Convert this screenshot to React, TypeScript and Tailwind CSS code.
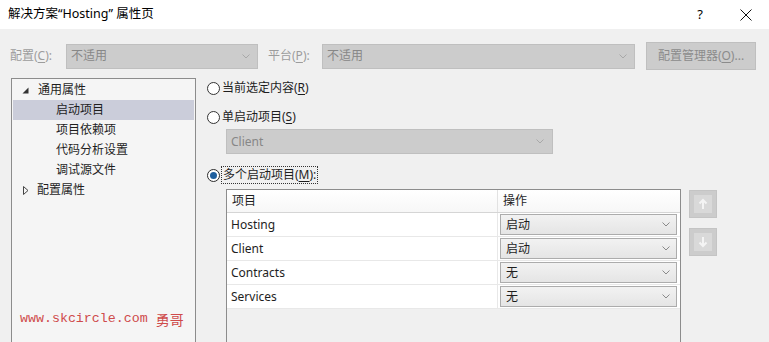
import React from "react";

function Chevron({ c = "#a0a0a0" }: { c?: string }) {
  return (
    <svg width="8" height="5" viewBox="0 0 8 5">
      <path d="M0.5 0.5 L4 4 L7.5 0.5" fill="none" stroke={c} strokeWidth="1" />
    </svg>
  );
}

function U({ children }: { children: React.ReactNode }) {
  return <span className="underline underline-offset-[2px]">{children}</span>;
}

function DisabledCombo({ text, w }: { text: string; w: string }) {
  return (
    <div className={`${w} h-[25px] bg-[#cccccc] border border-[#bfbfbf] flex items-center justify-between pl-[4px] pr-[7px] text-[#878787]`}>
      <span>{text}</span>
      <Chevron c="#a8a8a8" />
    </div>
  );
}

function Radio({ checked }: { checked?: boolean }) {
  return (
    <div className={`w-[13px] h-[13px] rounded-full border ${checked ? "border-[#2b2b2b]" : "border-[#333333]"} bg-white flex items-center justify-center shrink-0`}>
      {checked && <div className="w-[7px] h-[7px] rounded-full bg-[#1f5f9e]" />}
    </div>
  );
}

function OpCombo({ text }: { text: string }) {
  return (
    <div className="h-[21px] ml-[2px] mr-[1px] border border-[#acacac] bg-gradient-to-b from-[#f2f2f2] to-[#e5e5e5] flex items-center justify-between pl-[5px] pr-[6px] text-[#1e1e1e]">
      <span>{text}</span>
      <Chevron c="#8a8a8a" />
    </div>
  );
}

function ArrowBtn({ up }: { up?: boolean }) {
  return (
    <div className="w-[28px] h-[28px] bg-[#cccccc] border border-[#c4c4c4] flex items-center justify-center">
      <div className="w-[18px] h-[18px] bg-[#d9d9d9] flex items-center justify-center">
        <svg width="10" height="12" viewBox="0 0 10 12">
          {up ? (
            <path d="M5 11 V2 M1.5 5.5 L5 2 L8.5 5.5" fill="none" stroke="#f4f4f4" strokeWidth="2" />
          ) : (
            <path d="M5 1 V10 M1.5 6.5 L5 10 L8.5 6.5" fill="none" stroke="#f4f4f4" strokeWidth="2" />
          )}
        </svg>
      </div>
    </div>
  );
}

export default function App() {
  const rows: [string, string][] = [
    ["Hosting", "启动"],
    ["Client", "启动"],
    ["Contracts", "无"],
    ["Services", "无"],
  ];
  return (
    <div className="w-[769px] h-[342px] overflow-hidden bg-[#f0f0f0] text-[12px] leading-none text-[#1e1e1e] font-['Noto_Sans','Noto_Sans_CJK_SC',sans-serif] flex flex-col">
      {/* title bar */}
      <div className="h-[29px] bg-white flex items-center pl-[8px] shrink-0">
        <span className="text-[12.5px] text-black">解决方案“Hosting” 属性页</span>
        <div className="flex-1" />
        <span className="text-[13px] text-black mr-[37px]">?</span>
        <svg width="12" height="12" viewBox="0 0 12 12" className="mr-[17px]">
          <path d="M0.5 0.5 L11.5 11.5 M11.5 0.5 L0.5 11.5" stroke="#111" strokeWidth="1" />
        </svg>
      </div>

      {/* config row */}
      <div className="mt-[13px] h-[28px] flex items-center pl-[10px] shrink-0">
        <span className="text-[#9c9c9c] w-[56px]">
          配置(<U>C</U>):
        </span>
        <DisabledCombo text="不适用" w="w-[192px]" />
        <span className="text-[#9c9c9c] ml-[10px] w-[54px]">
          平台(<U>P</U>):
        </span>
        <DisabledCombo text="不适用" w="w-[313px]" />
        <div className="ml-[11px] w-[110px] h-[28px] bg-[#cccccc] border border-[#bfbfbf] flex items-center justify-center text-[#8b8b8b]">
          配置管理器(<U>O</U>)...
        </div>
      </div>

      {/* main */}
      <div className="mt-[8px] flex flex-1 min-h-0 pl-[11px]">
        {/* tree */}
        <div className="w-[185px] h-[300px] border border-[#8c8c8c] bg-[#f5f5f5] pt-[1px] px-[1px] shrink-0">
          <div className="h-[20px] flex items-center">
            <svg width="7" height="7" viewBox="0 0 7 7" className="ml-[9px] mr-[9px]">
              <path d="M6.5 0.5 L6.5 6.5 L0.5 6.5 Z" fill="#333" />
            </svg>
            <span>通用属性</span>
          </div>
          <div className="h-[20px] flex items-center bg-[#cbcdda] pl-[43px]">启动项目</div>
          <div className="h-[20px] flex items-center pl-[43px]">项目依赖项</div>
          <div className="h-[20px] flex items-center pl-[43px]">代码分析设置</div>
          <div className="h-[20px] flex items-center pl-[43px]">调试源文件</div>
          <div className="h-[20px] flex items-center">
            <svg width="6" height="9" viewBox="0 0 6 9" className="ml-[10px] mr-[8px]">
              <path d="M0.5 0.5 L5 4.5 L0.5 8.5 Z" fill="none" stroke="#444" strokeWidth="1" />
            </svg>
            <span>配置属性</span>
          </div>
          <div className="mt-[112px] pl-[7px] text-[#cf4b4b] font-['Liberation_Mono','Noto_Sans_CJK_SC',monospace] text-[13.3px] flex items-center">
            <span>www.skcircle.com</span>
            <span className="ml-[8px] text-[14px] font-['Noto_Sans_CJK_SC',serif]">勇哥</span>
          </div>
        </div>

        {/* right content */}
        <div className="ml-[11px] flex flex-col">
          <div className="mt-[2px] h-[16px] flex items-center gap-[2px] shrink-0">
            <Radio />
            <span>
              当前选定内容(<U>R</U>)
            </span>
          </div>
          <div className="mt-[13px] h-[16px] flex items-center gap-[2px] shrink-0">
            <Radio />
            <span>
              单启动项目(<U>S</U>)
            </span>
          </div>
          <div className="mt-[4px] ml-[19px] w-[327px] h-[25px] bg-[#cccccc] border border-[#bfbfbf] flex items-center justify-between pl-[4px] pr-[8px] text-[#878787] shrink-0">
            <span>Client</span>
            <Chevron c="#a8a8a8" />
          </div>
          <div className="mt-[12px] h-[18px] flex items-center gap-[1px] shrink-0">
            <Radio checked />
            <span className="border border-dotted border-[#333] px-[1px] h-[18px] flex items-center">
              多个启动项目(<U>M</U>):
            </span>
          </div>
          <div className="mt-[5px] flex shrink-0">
            {/* grid */}
            <div className="ml-[19px] w-[455px] h-[160px] border border-[#8c8c8c] bg-[#f0f0f0]">
              <div className="h-[23px] flex bg-gradient-to-b from-white to-[#f7f7f7] border-b border-[#d5d5d5]">
                <div className="w-[271px] border-r border-[#e2e2e2] flex items-center pl-[5px]">项目</div>
                <div className="flex-1 flex items-center pl-[5px]">操作</div>
              </div>
              {rows.map(([name, op]) => (
                <div key={name} className="h-[24px] flex bg-white border-b border-[#e8e8e8]">
                  <div className="w-[271px] border-r border-[#e8e8e8] flex items-center pl-[4px]">{name}</div>
                  <div className="w-[180px] flex flex-col justify-center">
                    <OpCombo text={op} />
                  </div>
                </div>
              ))}
            </div>
            <div className="ml-[8px] mt-[1px] flex flex-col gap-[10px]">
              <ArrowBtn up />
              <ArrowBtn />
            </div>
          </div>
        </div>
      </div>
    </div>
  );
}
